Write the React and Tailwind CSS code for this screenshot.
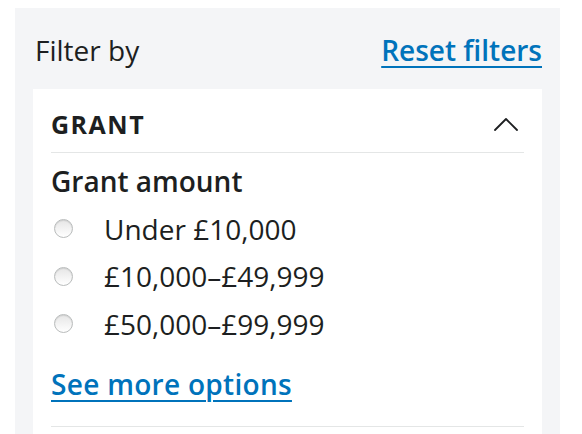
const options = ["Under £10,000", "£10,000–£49,999", "£50,000–£99,999"];

export default function App() {
  return (
    <div
      className="h-[434px] overflow-hidden bg-white pt-2 pl-[15px] text-[#1d1f21]"
      style={{ fontFamily: '"Open Sans", sans-serif' }}
    >
      <div className="w-[545px] h-[440px] bg-[#f4f5f7] px-[18px] pt-[22px]">
        <div className="flex items-baseline justify-between pl-[2px] leading-[40px]">
          <span className="text-[28px]">Filter by</span>
          <a href="#" className="text-[28px] font-semibold text-[#0073bb] underline underline-offset-[5px] decoration-2">
            Reset filters
          </a>
        </div>

        <div className="mt-[19px] bg-white px-[18px] h-[400px]">
          <div className="flex items-center justify-between pt-[19px] pb-[12px] border-b border-[#e4e6e6]">
            <span className="text-[25px] font-bold tracking-[1.5px] leading-[32px]">GRANT</span>
            <svg width="24" height="16" viewBox="0 0 24 16" className="mr-[6px]" fill="none" stroke="#1d1f21" strokeWidth="1.8" strokeLinecap="round" strokeLinejoin="round">
              <polyline points="1,14 12,3 23,14" />
            </svg>
          </div>

          <div className="pt-[4px]">
            <div className="text-[28px] font-semibold leading-[48px]">Grant amount</div>
            <div className="flex flex-col">
              {options.map((o) => (
                <label key={o} className="flex items-center h-[47.5px] text-[28px]">
                  <span className="w-[19px] h-[19px] ml-[3px] mr-[31px] rounded-full border border-[#b9bcbc] bg-gradient-to-b from-[#e6e6e6] to-white shadow-[inset_0_1px_1px_rgba(0,0,0,0.1)]" />
                  <span>{o}</span>
                </label>
              ))}
            </div>
            <a href="#" className="block mt-[16px] text-[28px] font-semibold tracking-[0.3px] text-[#0073bb] underline underline-offset-[5px] decoration-2 leading-[40px] w-fit">
              See more options
            </a>
          </div>
          <div className="mt-[22px] border-b border-[#e4e6e6]" />
        </div>
      </div>
    </div>
  );
}
